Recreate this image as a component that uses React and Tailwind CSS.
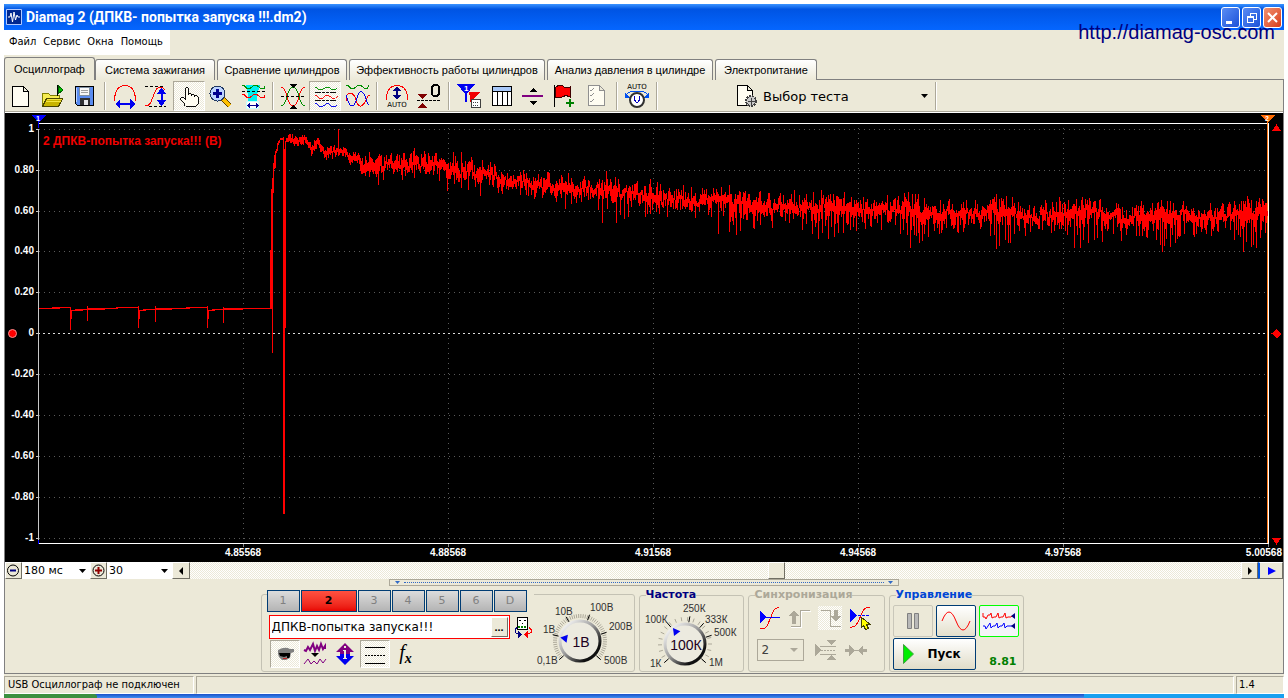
import React, { useState } from "react";

const TABS = [
  { label: "Осциллограф", width: "w-[91px]" },
  { label: "Система зажигания", width: "w-[120px]" },
  { label: "Сравнение цилиндров", width: "w-[130px]" },
  { label: "Эффективность работы цилиндров", width: "w-[196px]" },
  { label: "Анализ давления в цилиндре", width: "w-[166px]" },
  { label: "Электропитание", width: "w-[102px]" },
];

const MENU = ["Файл", "Сервис", "Окна", "Помощь"];
const CHANNELS = ["1", "2", "3", "4", "5", "6", "D"];

const HATCH = "bg-[repeating-conic-gradient(#ffffff_0_25%,#ece9d8_0_50%)] bg-[length:2px_2px]";
const RAISED = "border border-t-white border-l-white border-r-[#716f64] border-b-[#716f64] bg-[#ece9d8]";
const PRESSED = "border border-t-[#aca899] border-l-[#aca899] border-r-white border-b-white";

/* ---------- signal ---------- */

// idle level before the crank starts: [from, to, y, thickness]
const IDLE = [
  [39, 52, 308, 1], [52, 60, 307, 2], [60, 71, 307, 1], [71, 83, 310, 1], [75, 89, 309, 1], [88, 105, 308, 2],
  [105, 118, 308, 1], [116, 139, 307, 1], [139, 146, 310, 1], [143, 156, 309, 1], [156, 172, 308, 2],
  [172, 190, 308, 1], [186, 208, 307, 1], [208, 215, 310, 1], [212, 224, 309, 1], [224, 243, 308, 2],
  [243, 271, 308, 1],
];

// [x, middle of the trace]
const BASE = [
  [288, 141], [304, 140], [311, 148], [318, 144], [325, 153], [334, 152], [345, 150], [351, 158], [357, 157],
  [362, 166], [400, 165], [412, 164], [430, 162], [448, 168], [470, 170], [484, 174], [500, 178], [520, 182],
  [550, 189], [580, 187], [610, 190], [640, 195], [660, 198], [690, 201], [720, 200], [750, 203], [775, 206],
  [800, 206], [830, 206], [865, 210], [905, 209], [930, 212], [965, 214], [1000, 210], [1035, 217],
  [1060, 215], [1085, 211], [1130, 217], [1165, 214], [1205, 217], [1245, 213], [1267, 212],
];

const DIPS = [
  [378, 185], [402, 180], [414, 178], [439, 181], [447, 191], [454, 184], [461, 188], [468, 190], [480, 196], [498, 193],
  [520, 195], [534, 199], [556, 202], [565, 209], [571, 204], [581, 202], [598, 210], [602, 223], [607, 209],
  [616, 223], [620, 215], [624, 219], [628, 217], [645, 217], [650, 214], [711, 217], [718, 234], [723, 216],
  [729, 232], [732, 221], [736, 235], [740, 231], [746, 220], [753, 228], [757, 221], [760, 225], [771, 221],
  [785, 221], [802, 230], [806, 224], [812, 234], [815, 227], [818, 239], [822, 233], [825, 226], [828, 239],
  [831, 227], [834, 237], [838, 233], [843, 233], [850, 230], [856, 231], [865, 229], [870, 226], [900, 234], [903, 230],
  [907, 235], [910, 248], [913, 226], [916, 236], [919, 243], [922, 241], [924, 234], [928, 237], [934, 231],
  [939, 234], [946, 228], [957, 232], [964, 228], [990, 236], [994, 235], [996, 249], [999, 246], [1005, 240],
  [1008, 243], [1010, 243], [1014, 234], [1019, 231], [1025, 236], [1030, 232], [1038, 229], [1042, 230],
  [1051, 233], [1065, 231], [1074, 248], [1077, 235], [1080, 248], [1083, 240], [1088, 243], [1094, 240],
  [1097, 238], [1102, 242], [1107, 231], [1113, 234], [1120, 231], [1139, 236], [1142, 236], [1147, 238],
  [1156, 240], [1158, 230], [1160, 245], [1162, 252], [1164, 246], [1170, 247], [1175, 243], [1178, 236],
  [1180, 236], [1184, 234], [1193, 235], [1201, 232], [1206, 234], [1230, 230], [1234, 240], [1238, 235],
  [1240, 237], [1243, 252], [1246, 242], [1251, 247], [1253, 245], [1256, 248], [1260, 238], [1265, 233],
];

const PEAKS = [
  [338, 129], [369, 152], [390, 155], [409, 158], [417, 156], [434, 156], [453, 152], [461, 152], [490, 162], [523, 170],
  [547, 172], [561, 175], [568, 173], [584, 176], [606, 171], [615, 177], [657, 182], [691, 187], [713, 188], [721, 187],
  [729, 185], [794, 190], [813, 192], [821, 190], [830, 194], [843, 198], [887, 195], [905, 197], [912, 194], [918, 194],
  [940, 200], [949, 199], [975, 200], [992, 199], [999, 199], [1006, 196], [1018, 202], [1059, 197], [1082, 197],
  [1089, 198], [1116, 203], [1141, 201], [1157, 203], [1170, 201], [1222, 203], [1245, 201], [1251, 200], [1266, 203],
];

function middleAt(x) {
  for (let i = 1; i < BASE.length; i++) {
    if (x <= BASE[i][0]) {
      const [x0, y0] = BASE[i - 1];
      const [x1, y1] = BASE[i];
      return y0 + ((y1 - y0) * (x - x0)) / (x1 - x0);
    }
  }
  return 212;
}

function buildNoise() {
  const dips = new Map(DIPS);
  const peaks = new Map(PEAKS);
  let seed = 4217;
  const rnd = () => {
    seed = (seed * 16807) % 2147483647;
    return seed / 2147483647;
  };
  let d = "";
  let drift = 0;
  for (let x = 288; x < 1268; x++) {
    const quiet = x < 360;
    const burst = x > 580 ? Math.pow(Math.max(0, Math.cos(((x - 911) / 84) * Math.PI * 2)), 2) : 0;
    drift = drift * 0.5 + (rnd() - 0.5) * (quiet ? 5 : 8);
    const mid = middleAt(x) + drift;
    let top = mid - 2 - Math.pow(rnd(), 2) * (quiet ? 4 : 10 + burst * 3);
    let bottom = mid + 2 + Math.pow(rnd(), 1.5) * (quiet ? 4 : 9 + burst * 8);
    if (x > 680 && rnd() > 0.7) bottom += rnd() * 11;
    if (dips.has(x)) bottom = dips.get(x);
    if (peaks.has(x)) top = peaks.get(x);
    d += `M${x} ${Math.round(top)}h1V${Math.round(bottom)}h-1z`;
  }
  return d;
}

const NOISE = buildNoise();

const Y_LABELS = [
  ["1", 129], ["0.80", 170], ["0.60", 211], ["0.40", 251], ["0.20", 292], ["0", 333],
  ["-0.20", 374], ["-0.40", 415], ["-0.60", 456], ["-0.80", 497], ["-1", 538],
];
const X_LABELS = [
  ["4.85568", 243], ["4.88568", 448], ["4.91568", 653], ["4.94568", 858], ["4.97568", 1063], ["5.00568", 1268],
];

function Scope() {
  return (
    <svg
      viewBox="5 113 1278 449"
      className="block w-full bg-black"
      fontFamily="'Liberation Sans', Arial, sans-serif"
      shapeRendering="crispEdges"
    >
      {/* grid */}
      {Y_LABELS.map(([label, y]) => (
        <g key={label}>
          {label !== "0" && (
            <path d={`M39 ${y + 0.5}H1267`} stroke="#5a5a5a" strokeDasharray="1 4" />
          )}
          <path d={`M36 ${y + 0.5}h3`} stroke="#c8c8c8" />
          <text x="34" y={y + 3} textAnchor="end" fontSize="10" fontWeight="bold" fill="#fff">
            {label}
          </text>
        </g>
      ))}
      {X_LABELS.map(([label, x]) => (
        <g key={label}>
          <path d={`M${x + 0.5} 128V543`} stroke="#5a5a5a" strokeDasharray="1 4" />
          <path d={`M${x + 0.5} 544v3`} stroke="#808080" />
          <text
            x={x > 1200 ? 1282 : x}
            y="556"
            textAnchor={x > 1200 ? "end" : "middle"}
            fontSize="10"
            fontWeight="bold"
            fill="#fff"
          >
            {label}
          </text>
        </g>
      ))}
      <path d="M38 333.5H1267" stroke="#dcdcdc" strokeDasharray="2 3" />
      <path d="M38.5 129V540" stroke="#c8c8c8" />
      <path d="M38 123.5H1268M38 543.5H1269" stroke="#fff" />
      <path d="M1268.5 123V544" stroke="#fff" />
      <path d="M1267.5 119V543" stroke="#ff7a1a" />

      <text x="43" y="145" fontSize="12" fontWeight="bold" fill="#f00000">
        2 ДПКВ-попытка запуска!!! (В)
      </text>

      {/* trace */}
      <g fill="#f00">
        {IDLE.map(([from, to, y, h]) => (
          <rect key={from} x={from} y={y} width={to - from} height={h} />
        ))}
        <path d="M70 308h1v22h-1zM71 310h1v9h-1zM87 306h1v15h-1zM138 306h1v22h-1zM139 310h1v9h-1zM155 306h1v16h-1zM207 306h1v22h-1zM208 310h1v9h-1zM223 307h1v16h-1z" />
        <path d="M270 250h2v59h-2zM271 189h2v70h-2zM272 178h1v175h-1zM273 163h1v30h-1zM274 155h1v14h-1zM275 151h1v17h-1zM276 149h1v4h-1zM277 143h1v8h-1zM278 141h1v4h-1zM279 140h1v3h-1zM280 138h3v2h-3zM283 137h1v377h-1zM284 149h1v365h-1zM285 141h1v187h-1zM286 138h2v4h-2z" />
        <path d={NOISE} />
      </g>

      {/* markers */}
      <path d="M31 115h15l-7 7v6h-1v-6z" fill="#00f" />
      <path d="M38 540h1v4h-1z" fill="#00f" />
      <text x="38" y="121" textAnchor="middle" fontSize="7" fontWeight="bold" fill="#fff">1</text>
      <path d="M1260 115h15l-7 7z" fill="#ff6a00" />
      <text x="1267" y="121" textAnchor="middle" fontSize="7" fontWeight="bold" fill="#fff">2</text>
      <path d="M1272 131l4.500-7 4.500 7zM1272 538h9l-4.500 7zM1276.500 329l5 4.500-5 5-5-5z" fill="#f00" />
      <circle cx="12.500" cy="333.500" r="4" fill="#f00" stroke="#ff9090" shapeRendering="auto" />
    </svg>
  );
}

/* ---------- toolbar icons ---------- */

function Icon({ children }) {
  return (
    <svg viewBox="0 0 32 30" className="h-[30px] w-8" fill="none" shapeRendering="crispEdges">
      {children}
    </svg>
  );
}

const autoText = (y) => (
  <text x="16" y={y} textAnchor="middle" fontSize="7" fontFamily="'DejaVu Sans', sans-serif" fill="#000">
    AUTO
  </text>
);

const ICONS = {
  new: (
    <Icon>
      <path d="M7.500 5.500h11l5 5v15h-16zM18.500 5.500v5h5" fill="#fffdf2" stroke="#000" />
    </Icon>
  ),
  open: (
    <Icon>
      <path d="M5.500 24.500v-12h6l2 2h9v3" fill="#f6ec50" stroke="#808000" />
      <path d="M5.500 25.500l4-8h16l-4 8z" fill="#c8b400" stroke="#4a4600" />
      <path d="M10 18.500h15M9 20.500h15" stroke="#f4e640" />
      <path d="M20.500 15V4" stroke="#000" />
      <path d="M21 4.500l5 4.500-5 4z" fill="#00c000" stroke="#006000" />
    </Icon>
  ),
  save: (
    <Icon>
      <path d="M6.500 5.500h18v19h-16l-2-2z" fill="#5a8cf0" stroke="#000" />
      <path d="M10.500 6.500h10v8h-10z" fill="#f8f8f8" stroke="#8090a0" />
      <path d="M12 9.500h7M12 11.500h7" stroke="#a0a0a0" />
      <path d="M11 17h10v7H11z" fill="#303030" />
      <path d="M15 19h4v5h-4z" fill="#e8e8e8" />
      <path d="M7.500 7v14" stroke="#bcd4ff" />
    </Icon>
  ),
  periodX: (
    <Icon>
      <path d="M5.500 20v-3Q7 4.500 16 4.500T26.500 17v3" stroke="#f00" />
      <path d="M9 23h14" stroke="#0000f0" strokeWidth="2" />
      <path d="M6 23l5-5v10zM26 23l-5-5v10z" fill="#0000f0" />
    </Icon>
  ),
  periodY: (
    <Icon>
      <path d="M4 5.500h18M8 25.500h17" stroke="#000" strokeDasharray="3 2" />
      <path d="M4 24.500q5 1 7-6t5-11q4-3 8 1" stroke="#f00" />
      <path d="M20.500 10v12" stroke="#0000f0" strokeWidth="2" />
      <path d="M20.500 7l5 6h-10zM20.500 25l5-6h-10z" fill="#0000f0" />
    </Icon>
  ),
  hand: (
    <Icon>
      <path
        d="M12.500 19V7.500q0-2 1.500-2t1.500 2V14v-1.500h3V15v-1.500h3V16v-1.500h3l2 2V22l-3 4H13l-2-3-4-4v-2h3z"
        fill="#fffdf2"
        stroke="#000"
      />
    </Icon>
  ),
  zoom: (
    <Icon>
      <path d="M18 18l7 7" stroke="#604000" strokeWidth="5" />
      <path d="M18 18l7 7" stroke="#ffc000" strokeWidth="3" />
      <circle cx="12.500" cy="12.500" r="7.500" fill="#bcd4ff" stroke="#203860" />
      <path d="M8 12.500h9M12.500 8v9" stroke="#000090" strokeWidth="3" />
    </Icon>
  ),
  select: (
    <Icon>
      <path d="M9 4h14l-3 10v13h-9V14z" fill="#00f0f0" />
      <path d="M5 4.500h2l3 3h3l4-3h3l4 3h3l1-2" stroke="#009000" />
      <path d="M5 10.500h23" stroke="#000" strokeDasharray="3 2" />
      <path d="M5 13.500h2l3 3h3l4-3h3l4 3h3l1-2" stroke="#f00" />
      <path d="M9.500 20.500h12v7h-12z" fill="#fff" stroke="#c8ffff" />
      <path d="M11 24.500h10M13 22.500l-2 2 2 2M19 22.500l2 2-2 2" stroke="#000090" />
    </Icon>
  ),
  cross: (
    <Icon>
      <path d="M4 6.500q4 0 6 9t6 9 6-9 6-9" stroke="#f00" />
      <path d="M4 24.500q4 0 6-9t6-9 6 9 6 9" stroke="#009000" />
      <path d="M4 15.500h24" stroke="#000" strokeDasharray="3 2" />
      <path d="M13 3h7l-3.500 4zM13 28h7l-3.500-4z" fill="#000" />
    </Icon>
  ),
  split: (
    <Icon>
      <path d="M5 5.500h2l3 3h3l4-3h3l4 3h3l2-2" stroke="#009000" />
      <path d="M5 11.500h23M5 19.500h23" stroke="#000" strokeDasharray="3 1" />
      <path d="M5 14.500h2l3 3h3l4-3h3l4 3h3l2-2" stroke="#f00" />
      <path d="M5 23.500h2l3 3h3l4-3h3l4 3h3l2-2" stroke="#0000f0" />
    </Icon>
  ),
  overlay: (
    <Icon>
      <path d="M5 4.500h2l3 3h3l4-3h3l4 3h2l2-3" stroke="#009000" />
      <path d="M5 20q0-8 4-8t6 7 5 6 5-6 4-5" stroke="#f00" />
      <path d="M5 14q3 11 6 11t5-8 5-6 4 7 3 6" stroke="#0000f0" />
    </Icon>
  ),
  autoY: (
    <Icon>
      <path d="M5.500 19v-4Q7 4.500 16 4.500T26.500 15v4" stroke="#f00" />
      <path d="M16 8v8" stroke="#000080" strokeWidth="2" />
      <path d="M16 5l4 5h-8zM16 19l4-5h-8z" fill="#000080" />
      {autoText(26)}
    </Icon>
  ),
  zero: (
    <Icon>
      <path d="M4 19.500h24" stroke="#000" strokeDasharray="3 1" />
      <path d="M5 13h9l-4.500 5zM5 27h9l-4.500-5z" fill="#800000" />
      <rect x="19" y="4" width="7" height="11" rx="3" stroke="#000" strokeWidth="2" />
    </Icon>
  ),
  markers: (
    <Icon>
      <path d="M4 3h18l-9 11z" fill="#0000f0" />
      <path d="M13 12v9" stroke="#0000f0" strokeWidth="2" />
      <text x="11" y="10" fontSize="8" fontWeight="bold" fontFamily="Liberation Sans" fill="#fff">1</text>
      <path d="M16 11h11l-7 8v5l-3-3v-5z" fill="#f00000" />
      <path d="M18.500 18.500h9v8h-9z" fill="#fff" stroke="#404040" />
      <path d="M20 21.500h6M20 24.500h6" stroke="#404040" strokeDasharray="1 1" />
    </Icon>
  ),
  table: (
    <Icon>
      <path d="M7.500 5.500h19v19h-19z" fill="#fff" stroke="#000" />
      <path d="M8 6h18v4H8z" fill="#a8c8f8" />
      <path d="M7 10.500h20M12.500 10v14M17.500 10v14M22.500 10v14" stroke="#000" />
    </Icon>
  ),
  spread: (
    <Icon>
      <path d="M5 15h21" stroke="#800080" strokeWidth="2" />
      <path d="M12 11h8l-4-4zM12 20h8l-4 4z" fill="#000" />
    </Icon>
  ),
  flag: (
    <Icon>
      <path d="M5.500 4v22" stroke="#000" />
      <path d="M6.500 6.500q4-4 8-1t7 0v11q-4-3-7-1t-8 1z" fill="#f00" stroke="#400000" />
      <path d="M17 22h8M21 18v8" stroke="#008000" strokeWidth="2" />
    </Icon>
  ),
  checklist: (
    <Icon>
      <path d="M7.500 4.500h11l5 5v15h-16zM18.500 4.500v5h5" fill="#fffdf2" stroke="#909090" />
      <path d="M9 9l1 1 3-3M9 14l1 1 3-3M9 20l1 1 3-3" stroke="#909090" />
    </Icon>
  ),
  autoDial: (
    <Icon>
      {autoText(8)}
      <path d="M5 14q3-4 11-4t11 4" stroke="#0050f0" />
      <path d="M4 12v5h6zM28 12v5h-6z" fill="#0050f0" />
      <circle cx="16" cy="19" r="7" fill="#fff" stroke="#303030" strokeWidth="2" shapeRendering="auto" />
      <path d="M13.500 15v4l2.500 3 2.500-3v-4" stroke="#0000c0" />
    </Icon>
  ),
};

const TOOLBAR = [
  ["new", "open", "save"],
  ["periodX", "periodY", "hand", "zoom", "select"],
  ["cross", "split", "overlay"],
  ["autoY", "zero"],
  ["markers", "table", "spread", "flag", "checklist"],
  ["autoDial"],
];

function Separator() {
  return <span className="mx-[3px] h-7 w-[2px] border-l border-l-[#aca899] bg-white" />;
}

function DownArrow() {
  return (
    <svg viewBox="0 0 7 4" className="pointer-events-none absolute top-1/2 right-1 h-1 w-[7px] -translate-y-1/2">
      <path d="M0 0h7L3.500 4z" fill="#000" />
    </svg>
  );
}

function Toolbar() {
  return (
    <div className="flex h-8 items-center border-b border-[#aca899]">
      {TOOLBAR.map((group, i) => (
        <React.Fragment key={i}>
          {group.map((name) => (
            <button
              key={name}
              aria-label={name}
              className={
                name === "hand" || name === "split"
                  ? `flex h-[30px] w-8 items-center justify-center overflow-hidden ${PRESSED} ${HATCH}`
                  : "flex h-[30px] w-8 items-center justify-center"
              }
            >
              {ICONS[name]}
            </button>
          ))}
          <Separator />
        </React.Fragment>
      ))}
      <label className="ml-[76px] flex w-[195px] items-center">
        <svg viewBox="0 0 24 24" className="h-6 w-6 shrink-0" fill="none" shapeRendering="crispEdges">
          <path d="M.5 1.500h10l5 5v15H.5zM10.500 1.500v5h5" fill="#fffdf2" stroke="#000" />
          <circle cx="14" cy="17" r="5" fill="#c8c8c8" stroke="#404040" strokeWidth="2" strokeDasharray="2 1" />
          <path d="M11 17.500h7M14.500 14v7" stroke="#404040" />
        </svg>
        <span className="relative grow">
          <select
            aria-label="Выбор теста"
            className="w-full appearance-none bg-transparent pl-[2px] font-['DejaVu_Sans',sans-serif] text-[13px] outline-none"
          >
            <option>Выбор теста</option>
          </select>
          <DownArrow />
        </span>
      </label>
      <Separator />
    </div>
  );
}

/* ---------- window chrome ---------- */

function TitleBar() {
  return (
    <header className="flex h-[26px] items-center gap-1 bg-linear-to-b from-[#3a93ff] via-[#0054e3] via-20% to-[#0566ff] px-[2px]">
      <svg viewBox="0 0 16 16" className="h-4 w-4" fill="none">
        <path d="M.5.5h15v15H.5z" fill="#002890" stroke="#b0c8ff" />
        <path d="M2 8h2l1-4 1.500 9L8 3l1.500 8L11 6l1 2h2" stroke="#fff" />
      </svg>
      <h1 className="grow font-[Roboto,sans-serif] text-[14px] font-bold text-white">
        Diamag 2 (ДПКВ- попытка запуска !!!.dm2)
      </h1>
      <div className="flex gap-[2px]">
        <button aria-label="Свернуть" className="h-[21px] w-[19px] rounded-[3px] border border-white bg-linear-to-br from-[#5a8cf4] to-[#1c50d8]">
          <svg viewBox="0 0 17 19" className="h-full w-full"><path d="M4 13h6v3H4z" fill="#fff" /></svg>
        </button>
        <button aria-label="Восстановить" className="h-[21px] w-[19px] rounded-[3px] border border-white bg-linear-to-br from-[#5a8cf4] to-[#1c50d8]">
          <svg viewBox="0 0 17 19" className="h-full w-full" fill="none" stroke="#fff" shapeRendering="crispEdges">
            <path d="M4.500 8.500h6v6h-6zM4 9.500h7M7.500 8V5.500h6v6H11M7 5h7" />
          </svg>
        </button>
        <button aria-label="Закрыть" className="h-[21px] w-[19px] rounded-[3px] border border-white bg-linear-to-br from-[#f09070] to-[#d83810]">
          <svg viewBox="0 0 17 19" className="h-full w-full"><path d="M4 5l9 9M13 5l-9 9" stroke="#fff" strokeWidth="2" /></svg>
        </button>
      </div>
    </header>
  );
}

function Tabs() {
  const [active, setActive] = useState("Осциллограф");
  return (
    <div className="flex h-[25px] items-end gap-[2px] text-[11px]">
      {TABS.map((tab) => (
        <button
          key={tab.label}
          onClick={() => setActive(tab.label)}
          className={`${tab.width} rounded-t-[3px] border border-b-0 border-[#808080] whitespace-nowrap ${
            tab.label === active
              ? "-mr-[2px] h-[23px] bg-[#ece9d8]"
              : "h-[21px] border-b bg-linear-to-b from-white to-[#ece9d8]"
          }`}
        >
          {tab.label}
        </button>
      ))}
      <span className="-ml-[2px] grow border-b border-[#808080]" />
    </div>
  );
}

function SmallSelect({ value, label, width }) {
  return (
    <span className={`relative flex ${width}`}>
      <select
        aria-label={label}
        className="h-[17px] w-full appearance-none bg-white pl-[2px] font-['DejaVu_Sans',sans-serif] text-[11px] leading-[17px] outline-none"
      >
        <option>{value}</option>
      </select>
      <DownArrow />
    </span>
  );
}

function ScrollRow() {
  return (
    <div className="flex h-[17px]">
      <button aria-label="Сжать" className={`w-[17px] ${RAISED}`}>
        <svg viewBox="0 0 15 15" className="h-[15px] w-[15px]" fill="none">
          <circle cx="7" cy="7.500" r="5.500" stroke="#000" />
          <path d="M4 7.500h6" stroke="#000080" strokeWidth="2" />
        </svg>
      </button>
      <SmallSelect value="180 мс" label="Время развертки" width="w-[68px]" />
      <button aria-label="Растянуть" className={`w-[17px] ${RAISED}`}>
        <svg viewBox="0 0 15 15" className="h-[15px] w-[15px]" fill="none">
          <circle cx="7.500" cy="7.500" r="5.500" stroke="#000" />
          <path d="M4 7.500h7M7.500 4v7" stroke="#900000" strokeWidth="2" />
        </svg>
      </button>
      <SmallSelect value="30" label="Шаг" width="w-[65px]" />
      <button aria-label="Назад" className={`w-[18px] ${RAISED}`}>
        <svg viewBox="0 0 16 15" className="h-[15px] w-4"><path d="M10 4v8L6 8z" /></svg>
      </button>
      <div className={`flex grow ${HATCH}`}>
        <span className="w-[55%]" />
        <button aria-label="Ползунок" className={`w-[17px] ${RAISED}`} />
      </div>
      <button aria-label="Вперед" className={`w-[17px] ${RAISED}`}>
        <svg viewBox="0 0 15 15" className="h-[15px] w-[15px]"><path d="M6 4v8l4-4z" /></svg>
      </button>
      <button aria-label="Прокрутка" className="w-[25px] border border-l-2 border-t-white border-r-[#716f64] border-b-[#716f64] border-l-[#0054e3]">
        <svg viewBox="0 0 22 15" className="h-[15px] w-[22px]"><path d="M8 4v8l8-4z" fill="#00f" /></svg>
      </button>
    </div>
  );
}

/* ---------- bottom panels ---------- */

function polar(cx, cy, r, deg) {
  const a = (deg * Math.PI) / 180;
  return [cx + r * Math.cos(a), cy - r * Math.sin(a)];
}

function Dial({ id, cx, cy, value, pointer, step, marks, labels, viewBox, className }) {
  const minor = [];
  for (let a = -42; a <= 222; a += step) minor.push(a);
  const tick = (a, r0, r1) => {
    const [x0, y0] = polar(cx, cy, r0, a);
    const [x1, y1] = polar(cx, cy, r1, a);
    return `M${x0.toFixed(1)} ${y0.toFixed(1)}L${x1.toFixed(1)} ${y1.toFixed(1)}`;
  };
  const [px, py] = polar(cx, cy, 16, pointer);
  return (
    <svg viewBox={viewBox} className={className} fontFamily="'Liberation Sans', Arial, sans-serif" fontSize="10">
      <defs>
        <linearGradient id={id} x1="0" y1="0" x2="1" y2="1">
          <stop offset="0.1" stopColor="#f4f4f4" />
          <stop offset="0.45" stopColor="#a0a0a0" />
          <stop offset="0.8" stopColor="#101010" />
        </linearGradient>
      </defs>
      <path d={minor.map((a) => tick(a, 23, 27)).join("")} stroke="#aca899" />
      <path d={marks.map((a) => tick(a, 22, 28)).join("")} stroke="#000" />
      <circle cx={cx} cy={cy} r="20" fill="#eceadf" stroke={`url(#${id})`} strokeWidth="3" />
      <path
        d="M-4 0L3 -4V4z"
        fill="#0000f0"
        transform={`translate(${px} ${py}) rotate(${180 - pointer})`}
      />
      <text x={cx + 1} y={cy + 6} textAnchor="middle" fontSize="14" fill="#200020">
        {value}
      </text>
      {labels.map(([text, x, y]) => (
        <text key={text} x={x} y={y} fill="#303030">
          {text}
        </text>
      ))}
    </svg>
  );
}

function Group({ title, titleClass, className, children }) {
  return (
    <fieldset className={`h-[84px] rounded-[3px] border border-[#c4c2b4] ${className}`}>
      <legend className={`ml-[6px] font-['DejaVu_Sans',sans-serif] text-[11px] leading-[14px] font-bold ${titleClass}`}>
        {title}
      </legend>
      {children}
    </fieldset>
  );
}

function ChannelPanel() {
  const [name, setName] = useState("ДПКВ-попытка запуска!!!");
  return (
    <section className="mt-[6px] flex h-[78px] w-[374px] rounded-[3px] border border-[#c4c2b4]">
      <div className="-mt-[5px] w-[272px] pl-[5px]">
        <div className="flex gap-px bg-[#ece9d8]">
          {CHANNELS.map((ch) => (
            <button
              key={ch}
              className={`h-[22px] border border-[#003c74] font-['DejaVu_Sans',sans-serif] text-[11px] ${
                ch === "2"
                  ? "w-14 bg-linear-to-b from-[#ff5040] to-[#e80000] font-bold text-black"
                  : "w-[33px] bg-linear-to-b from-[#dcdcdc] to-[#b4b4b4] text-[#808080]"
              }`}
            >
              {ch}
            </button>
          ))}
        </div>
        <div className="mt-[3px] flex items-center">
          <div className="ml-[2px] flex h-6 w-[241px] border border-[#f00] bg-white">
            <input
              aria-label="Название канала"
              value={name}
              onChange={(e) => setName(e.target.value)}
              className="w-0 grow pl-[2px] font-['DejaVu_Sans',sans-serif] text-[12px] outline-none"
            />
            <button aria-label="Изменить" className={`m-px w-[17px] text-[11px] leading-[10px] font-bold ${RAISED}`}>
              ...
            </button>
          </div>
          <svg viewBox="0 0 20 22" className="ml-[3px] h-[22px] w-5 shrink-0" fill="none" shapeRendering="crispEdges">
            <path d="M4.500 1.500h10v12h-10z" fill="#fff" stroke="#000" />
            <path d="M5 11h9" stroke="#008000" strokeWidth="2" strokeDasharray="2 1" />
            <path d="M6 4.500h2M11 4.500h2M9 7.500h1" stroke="#000" />
            <path d="M4 11.500l-2 2v3l4 2" stroke="#000080" />
            <path d="M5 15l4 3.500-4 3.500z" fill="#000080" />
            <path d="M16 11.500l2 2v3l-4 2" stroke="#f00" />
            <path d="M15 15l-4 3.500 4 3.500z" fill="#f00" />
          </svg>
        </div>
        <div className="mt-px ml-[3px] flex">
          <button aria-label="Показать" className={`h-7 w-[30px] ${PRESSED} ${HATCH}`}>
            <svg viewBox="0 0 28 26" className="h-[26px] w-7">
              <path d="M7 9q7-4 12-1h4v3l-3 1-1 5-4 2h-4l-3-3-1-3z" fill="#808080" />
              <path d="M8 12h11v3l-1 2h-2v-2l-3 1-4-1z" fill="#000" />
              <path d="M12 17h4v1h-4z" fill="#c02020" />
            </svg>
          </button>
          <button aria-label="Фильтр" className="h-7 w-[30px]">
            <svg viewBox="0 0 30 28" className="h-7 w-[30px]" fill="none" stroke="#800080">
              <path d="M4 10l2 1 2-4 2 3 3-6 2 7 2-5 2 4 2-6 2 5 2-3v3" strokeWidth="2" />
              <path d="M4 24l4-5 3 5 3-3 3 3 3-5 3 4 3-4" />
              <path d="M11 13h8l-4 4z" fill="#000" stroke="none" />
            </svg>
          </button>
          <button aria-label="Инверсия" className="h-7 w-[30px]">
            <svg viewBox="0 0 30 28" className="h-7 w-[30px]">
              <path d="M15 3l9 9h-4v2H10v-2H6z" fill="#800080" />
              <path d="M15 25l9-9h-4v-2H10v2H6z" fill="#0000f0" />
              <path d="M14 6h2v2h-2zM13 10h3v8h1v1h-4v-1h1v-7h-1z" fill="#ece9d8" />
            </svg>
          </button>
          <button aria-label="Линии" className={`h-7 w-[30px] ${PRESSED} ${HATCH}`}>
            <svg viewBox="0 0 28 26" className="h-[26px] w-7" stroke="#000" shapeRendering="crispEdges">
              <path d="M4 6.500h20M4 22.500h20" />
              <path d="M4 14.500h20" strokeDasharray="2 1" />
            </svg>
          </button>
          <button className="h-7 w-8 pb-1 font-['Liberation_Serif',serif] text-[20px] leading-[20px] italic">
            f<sub className="text-[14px] font-bold">x</sub>
          </button>
        </div>
      </div>
      <Dial
        id="volt"
        viewBox="534 595 100 76"
        className="h-[76px] w-[100px] shrink-0"
        cx={580}
        cy={641}
        value="1В"
        pointer={170}
        step={5}
        marks={[-42, 18, 70, 120, 167, 222]}
        labels={[["0,1В", 537, 664], ["1В", 543, 633], ["10В", 555, 615], ["100В", 590, 611], ["200В", 609, 630], ["500В", 604, 664]]}
      />
    </section>
  );
}

function SyncPanel() {
  return (
    <Group title="Синхронизация" titleClass="text-[#aca899]" className="w-[137px]">
      <div className="mt-1 ml-[9px] flex h-6 gap-[6px]">
        <button aria-label="Уровень">
          <svg viewBox="0 0 24 24" className="h-6 w-6" fill="none" shapeRendering="crispEdges">
            <path d="M2 22q5 3 8-4l5-12q2-5 6-4" stroke="#f00" />
            <path d="M2 11h20" stroke="#00f" />
            <path d="M2 5v12l6-6z" fill="#00f" />
          </svg>
        </button>
        <button aria-label="Фронт">
          <svg viewBox="0 0 24 24" className="h-6 w-6" fill="none" shapeRendering="crispEdges">
            <path d="M3 21.500h10.500V5.500H23" stroke="#fff" />
            <path d="M3 20.500h9.500V4.500H22" stroke="#aca899" />
            <path d="M6 4l5 6H8v8H4v-8H1z" fill="#aca899" />
          </svg>
        </button>
        <button aria-label="Спад" className={HATCH}>
          <svg viewBox="0 0 24 24" className="h-6 w-6" fill="none" shapeRendering="crispEdges">
            <path d="M3 4.500h9v16h11" stroke="#aca899" />
            <path d="M18 16l-5-6h3V4h4v6h3z" fill="#aca899" />
          </svg>
        </button>
        <button aria-label="Ручная">
          <svg viewBox="0 0 24 24" className="h-6 w-6" fill="none" shapeRendering="crispEdges">
            <path d="M2 21q5 1 8-5l5-11q3-5 7-3" stroke="#f00" />
            <path d="M2 9.500h20" stroke="#00f" strokeDasharray="3 1" />
            <path d="M2 3v13l7-6.500z" fill="#00f" />
            <path d="M13.500 11.500v10l2-2 2 4 3-1-2-4h4z" fill="#ff0" stroke="#404000" />
          </svg>
        </button>
      </div>
      <div className="mt-[9px] ml-2 flex items-center gap-2">
        <span className="relative flex">
          <select
            disabled
            aria-label="Канал синхронизации"
            className="h-[22px] w-[47px] appearance-none border border-[#aca899] pl-1 font-['DejaVu_Sans',sans-serif] text-[12px] text-[#404040] opacity-100"
          >
            <option>2</option>
          </select>
          <svg viewBox="0 0 8 4" className="absolute top-[9px] right-[6px] h-1 w-2"><path d="M0 0h8L4 4z" fill="#aca899" /></svg>
        </span>
        <button aria-label="Порог" disabled>
          <svg viewBox="0 0 24 22" className="h-[22px] w-6" fill="none" stroke="#aca899" shapeRendering="crispEdges">
            <path d="M8 7.500h16M8 15.500h16" />
            <path d="M9 11.500h15" strokeDasharray="2 1" />
            <path d="M3 5v12l6-6zM15 1h9l-4.500 5zM15 21h9l-4.500-5z" fill="#aca899" stroke="none" />
          </svg>
        </button>
        <button aria-label="Центр" disabled>
          <svg viewBox="0 0 24 22" className="h-[22px] w-6" shapeRendering="crispEdges">
            <path d="M1 10h4V6l5 5h4l5-5v4h4v3h-4v4l-5-5h-4l-5 5v-4H1z" fill="#aca899" />
          </svg>
        </button>
      </div>
    </Group>
  );
}

function ControlPanel() {
  return (
    <Group title="Управление" titleClass="text-[#0046d5]" className="w-[135px]">
      <div className="mt-[3px] ml-[3px] grid w-[126px] grid-cols-3 gap-x-[3px] gap-y-px">
        <button aria-label="Пауза" className="flex h-8 items-center justify-center rounded-[2px] border border-[#c9c7ba]">
          <svg viewBox="0 0 12 16" className="h-4 w-3" fill="#b8b8b8" stroke="#808080">
            <path d="M.5.500h4v15h-4zM7.500.5h4v15h-4z" />
          </svg>
        </button>
        <button aria-label="Синус" className="flex h-8 items-center justify-center rounded-[2px] border border-[#003c74] bg-linear-to-b from-white to-[#e4e0cc]">
          <svg viewBox="0 0 30 20" className="h-5 w-[30px]" fill="none" stroke="#f00">
            <path d="M1 10Q8-8 15 10T29 10" />
          </svg>
        </button>
        <button aria-label="Каналы" className="flex h-8 items-center justify-center rounded-[2px] border border-[#0f0] bg-[#f4f4f8]">
          <svg viewBox="0 0 34 20" className="h-5 w-[34px]" fill="none">
            <path d="M1 2v4h2l1 2 2-4h2l1-2 1 5 2-1h2l2-4 1 5 2-1h2l2-4 1 5 2-1h3l1-1" stroke="#f00" />
            <path d="M1 15h2l1 3 2-3 2-3 1 5 2-2h2l2-3 1 5 2-2h2l2-3 1 5 2-2h5" stroke="#00f" />
            <path d="M33 2v6l-4-3zM33 12v6l-4-3z" fill="#000080" />
          </svg>
        </button>
        <button className="col-span-2 flex h-8 items-center rounded-[2px] border border-[#003c74] bg-linear-to-b from-white to-[#e0dcc8] pl-[9px] font-['DejaVu_Sans',sans-serif] text-[12px] font-bold">
          <svg viewBox="0 0 11 20" className="h-5 w-[11px]">
            <path d="M.5.500v19l10-9.500z" fill="#0e0" stroke="#40a040" />
          </svg>
          <span className="grow text-center">Пуск</span>
        </button>
        <output className="self-end pr-[2px] pb-px text-right font-['DejaVu_Sans',sans-serif] text-[11px] leading-[14px] font-bold text-[#008000]">
          8.81
        </output>
      </div>
    </Group>
  );
}

export default function App() {
  return (
    <div className="min-h-screen bg-white px-1 pt-1 font-['Liberation_Sans',Arial,sans-serif] text-black">
      <div className="relative bg-[#ece9d8]">
        <TitleBar />
        <a
          href="http://diamag-osc.com"
          className="absolute top-[16px] right-[9px] text-[20px] leading-[24px] text-[#000080]"
        >
          http://diamag-osc.com
        </a>
        <nav className="flex h-[25px] w-[166px] items-center gap-[7px] bg-white px-[5px] font-['DejaVu_Sans_Condensed','DejaVu_Sans',sans-serif] text-[11px]">
          {MENU.map((item) => (
            <button key={item}>{item}</button>
          ))}
        </nav>
        <Tabs />
        <main className="border-x border-[#808080]">
          <Toolbar />
          <div className="border-t border-white">
            <Scope />
          </div>
          <ScrollRow />
          <div className="mx-auto flex h-[7px] w-[510px] items-center justify-between border border-[#aca899] px-[5px]">
            <svg viewBox="0 0 5 3" className="h-[3px] w-[5px]"><path d="M0 0h5L2.500 3z" fill="#316ac5" /></svg>
            <span className="mx-1 grow border-t border-dotted border-[#316ac5]" />
            <svg viewBox="0 0 5 3" className="h-[3px] w-[5px]"><path d="M0 0h5L2.500 3z" fill="#316ac5" /></svg>
          </div>
          <div className="flex h-[88px] justify-center gap-1 border-b border-[#808080] pt-[2px] pr-1">
            <ChannelPanel />
            <Group title="Частота" titleClass="text-[#000080]" className="w-[105px]">
              <Dial
                id="freq"
                viewBox="639 602 103 69"
                className="h-[69px] w-[103px]"
                cx={684}
                cy={644}
                value="100К"
                pointer={127}
                step={14}
                marks={[-42, 18, 48, 80, 130, 222]}
                labels={[["1К", 649, 667], ["100К", 644, 623], ["250К", 682, 612], ["333К", 704, 623], ["500К", 713, 636], ["1М", 708, 666]]}
              />
            </Group>
            <SyncPanel />
            <ControlPanel />
          </div>
        </main>
        <footer className="flex h-5 items-stretch gap-[2px] pt-[2px] font-['DejaVu_Sans_Condensed','DejaVu_Sans',sans-serif] text-[11px] leading-[16px]">
          <span className={`w-[190px] pl-[3px] ${PRESSED}`}>USB Осциллограф не подключен</span>
          <span className={`grow ${PRESSED}`} />
          <span className={`w-12 pl-[2px] ${PRESSED}`}>1.4</span>
        </footer>
        <div className="flex h-1 bg-linear-to-b from-[#1c50c8] to-[#3f8cf0]">
          <span className="w-[93px] rounded-tr-[3px] bg-[#3c9040]" />
          <span className="grow" />
          <span className="w-[200px] bg-[#18a0f0]" />
        </div>
      </div>
    </div>
  );
}
